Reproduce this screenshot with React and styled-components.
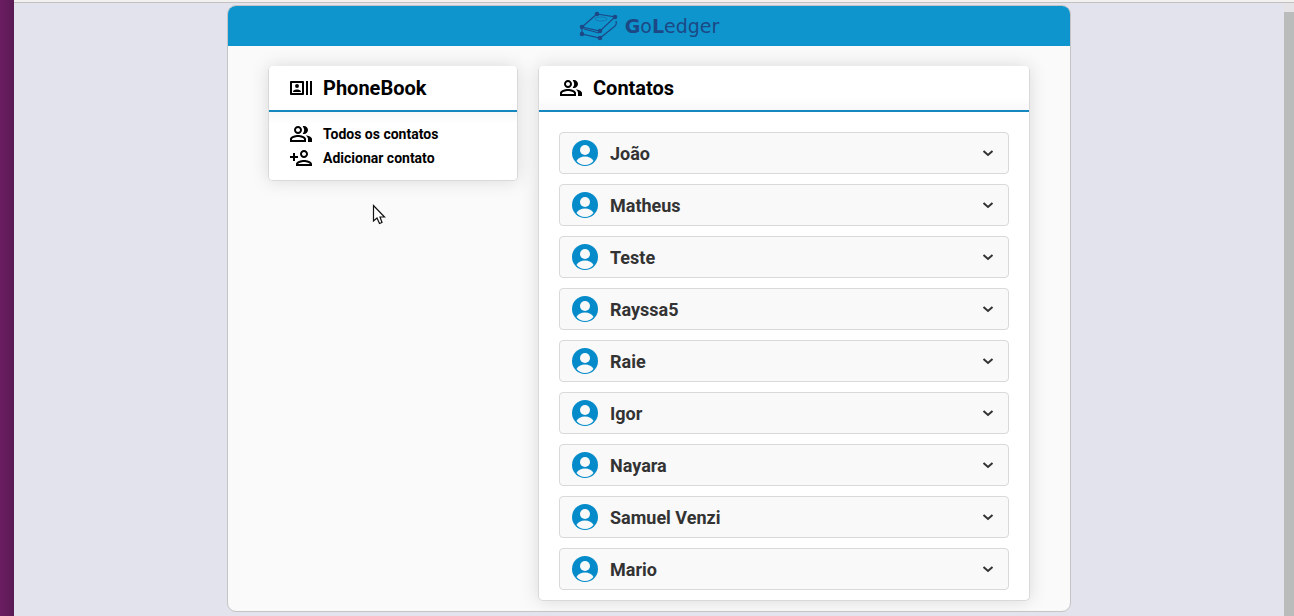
import React from "react";
import styled, { createGlobalStyle } from "styled-components";
import {
  MdOutlineRecentActors,
  MdOutlinePeopleAlt,
  MdOutlinePersonAdd,
} from "react-icons/md";

const contacts = [
  "João",
  "Matheus",
  "Teste",
  "Rayssa5",
  "Raie",
  "Igor",
  "Nayara",
  "Samuel Venzi",
  "Mario",
];

const GlobalStyle = createGlobalStyle`
  *, *::before, *::after { box-sizing: border-box; }
  body {
    margin: 0;
    background: #e3e3ed;
    color: #000;
    font-family: Roboto, "Liberation Sans", sans-serif;
  }
  h1, h2, ul { margin: 0; padding: 0; }
  ul { list-style: none; }
`;

const Desktop = styled.div`
  display: flex;
  min-height: 100vh;
`;

const Launcher = styled.div`
  flex: none;
  width: 14px;
  background: linear-gradient(90deg, #6c1d62, #5a1b55);
`;

const Viewport = styled.div`
  flex: 1;
  min-width: 0;
  display: flex;
  flex-direction: column;
`;

const BrowserEdge = styled.div`
  height: 3px;
  background: #f2f1f0;
  border-bottom: 1px solid #c4c1c1;
`;

const Body = styled.div`
  flex: 1;
  display: flex;
`;

const Scroller = styled.div`
  flex: 1;
  min-width: 0;
  padding: 2px 0 4px;
`;

const ScrollTrack = styled.div`
  flex: none;
  width: 10px;
  padding-top: 9px;
  background: #e6e3e6;
`;

const ScrollThumb = styled.div`
  height: 100%;
  background: #babcbb;
`;

const Page = styled.div`
  max-width: 844px;
  margin: 0 auto;
  overflow: hidden;
  background: #fafafa;
  border: 1px solid #c4c4c4;
  border-radius: 9px;
`;

const Header = styled.header`
  display: flex;
  align-items: center;
  justify-content: center;
  height: 40px;
  background: #0f95cd;
`;

const Brand = styled.a`
  display: flex;
  align-items: center;
  gap: 6px;
  color: #1c4886;
  font-family: "DejaVu Sans", sans-serif;
  font-size: 19px;
  line-height: 24px;
  text-decoration: none;
`;

const Columns = styled.div`
  display: flex;
  align-items: flex-start;
  gap: 20px;
  padding: 20px 40px 10px;
`;

const Panel = styled.section`
  flex: ${(p) => (p.$wide ? "1" : "none")};
  width: ${(p) => (p.$wide ? "auto" : "250px")};
  min-width: 0;
  background: #fff;
  border: 1px solid #d9d9d9;
  border-top: 0;
  border-radius: 5px;
  box-shadow: 0 0 18px rgba(0, 0, 0, 0.13);
`;

const PanelHeader = styled.div`
  display: flex;
  align-items: center;
  gap: 10px;
  height: 46px;
  padding: 0 20px;
  border-bottom: 2px solid #1688c0;
  border-radius: 4px 4px 0 0;
  background: ${(p) =>
    p.$shaded ? "linear-gradient(#fff 70%, #f8f8f8)" : "#fff"};

  svg { flex: none; }
`;

const Title = styled.h2`
  font-size: 20px;
  line-height: 24px;
  font-weight: 700;
`;

const Menu = styled.ul`
  padding: 10px 20px;
  background: linear-gradient(#f8f8f8, #fff 12px);
  border-radius: 0 0 4px 4px;
`;

const MenuLink = styled.a`
  display: flex;
  align-items: center;
  gap: 10px;
  color: #000;
  font-size: 14px;
  line-height: 24px;
  font-weight: 700;
  text-decoration: none;
`;

const ContactList = styled.ul`
  display: flex;
  flex-direction: column;
  gap: 10px;
  padding: 20px 20px 10px;
`;

const ContactButton = styled.button`
  display: flex;
  align-items: center;
  gap: 12px;
  width: 100%;
  height: 42px;
  padding: 0 14px 0 12px;
  color: #333;
  background: #f9f9f9;
  border: 1px solid #d9d9d9;
  border-radius: 4px;
  font: 700 18px/24px Roboto, "Liberation Sans", sans-serif;
  text-align: left;
  cursor: pointer;
`;

const ContactName = styled.span`
  flex: 1;
  padding-top: 2px;
`;

const Pointer = styled.svg`
  position: absolute;
  left: 372px;
  top: 204px;
`;

const BookLogo = () => (
  <svg width="40" height="30" viewBox="0 0 40 30" fill="none" stroke="#1c4886" strokeWidth="1.2" aria-hidden="true">
    <path d="M18 3 36 6 21 20 3 16ZM3 16V23L21 27 36 15Q38 13 37 10M5 18 20 22" />
    <ellipse cx="22" cy="8" rx="6" ry="2" strokeWidth="1" opacity=".4" />
    <g fill="#1c4886" stroke="none">
      <circle cx="18" cy="3" r="2.300" />
      <circle cx="36" cy="6" r="2.300" />
      <circle cx="3" cy="16" r="2.300" />
      <circle cx="21" cy="20" r="2.300" />
      <circle cx="3" cy="23" r="2.300" />
      <circle cx="21" cy="27" r="2.300" />
    </g>
  </svg>
);

const Avatar = () => (
  <svg width="26" height="26" viewBox="0 0 26 26" aria-hidden="true">
    <circle cx="13" cy="13" r="13" fill="#058bca" />
    <circle cx="13" cy="10" r="5" fill="#f9f9f9" />
    <path d="M4.500 21C6 18 9 16.500 13 16.500S20 18 21.500 21Q18 25 13 25T4.500 21Z" fill="#f9f9f9" />
  </svg>
);

const Chevron = () => (
  <svg width="12" height="12" viewBox="0 0 12 12" fill="none" stroke="#333" strokeWidth="2" aria-hidden="true">
    <path d="m1.500 4 4.500 4 4.500-4" />
  </svg>
);

export default function App() {
  return (
    <>
      <GlobalStyle />
      <Desktop>
        <Launcher />
        <Viewport>
          <BrowserEdge />
          <Body>
            <Scroller>
              <Page>
                <Header>
                  <Brand href="#">
                    <BookLogo />
                    <span><b>G</b>o<b>L</b>edger</span>
                  </Brand>
                </Header>
                <Columns>
                  <Panel>
                    <PanelHeader>
                      <MdOutlineRecentActors size={24} />
                      <Title>PhoneBook</Title>
                    </PanelHeader>
                    <Menu>
                      <li>
                        <MenuLink href="#contatos">
                          <MdOutlinePeopleAlt size={24} />
                          Todos os contatos
                        </MenuLink>
                      </li>
                      <li>
                        <MenuLink href="#adicionar">
                          <MdOutlinePersonAdd size={24} />
                          Adicionar contato
                        </MenuLink>
                      </li>
                    </Menu>
                  </Panel>
                  <Panel $wide>
                    <PanelHeader $shaded>
                      <MdOutlinePeopleAlt size={24} />
                      <Title>Contatos</Title>
                    </PanelHeader>
                    <ContactList>
                      {contacts.map((name) => (
                        <li key={name}>
                          <ContactButton type="button" aria-expanded="false">
                            <Avatar />
                            <ContactName>{name}</ContactName>
                            <Chevron />
                          </ContactButton>
                        </li>
                      ))}
                    </ContactList>
                  </Panel>
                </Columns>
              </Page>
            </Scroller>
            <ScrollTrack>
              <ScrollThumb />
            </ScrollTrack>
          </Body>
        </Viewport>
      </Desktop>
      <Pointer width="14" height="21" viewBox="0 0 14 21" aria-hidden="true">
        <path d="M1.500 1.500V17L5 14 7.500 19.500 10 18.500 8 13H12.500Z" fill="#fff" stroke="#111" strokeWidth="1.200" />
      </Pointer>
    </>
  );
}
